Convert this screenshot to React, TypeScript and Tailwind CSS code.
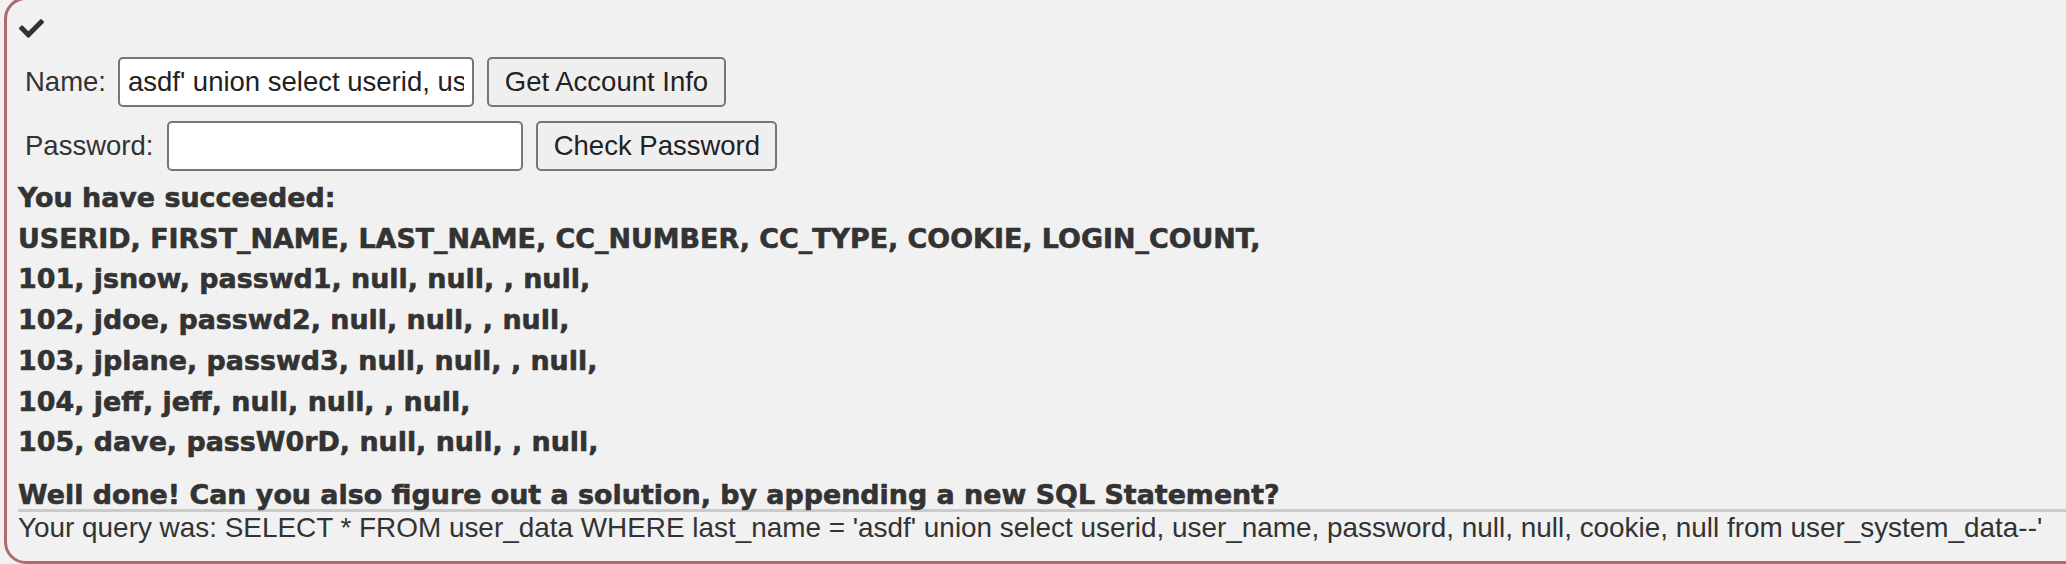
import { FaCheck } from 'react-icons/fa';

const rows = [
  'USERID, FIRST_NAME, LAST_NAME, CC_NUMBER, CC_TYPE, COOKIE, LOGIN_COUNT,',
  '101, jsnow, passwd1, null, null, , null,',
  '102, jdoe, passwd2, null, null, , null,',
  '103, jplane, passwd3, null, null, , null,',
  '104, jeff, jeff, null, null, , null,',
  '105, dave, passW0rD, null, null, , null,',
];

const query =
  "Your query was: SELECT * FROM user_data WHERE last_name = 'asdf' union select userid, user_name, password, null, null, cookie, null from user_system_data--'";

export default function App() {
  return (
    <div className="h-[564px] overflow-hidden bg-[#f1f1f1] text-[#333] font-['Liberation_Sans',Arial,sans-serif]">
      <div className="-mt-[3px] ml-[4px] w-[2200px] rounded-[22px] border-[3px] border-[#b26a6a] pl-[11px] pt-[16px] pb-[18px]">
        {/* status icon */}
        <FaCheck size={25} className="ml-[1px] text-[#333]" />

        {/* Name form */}
        <form className="mt-[16px] flex items-center pl-[7px] text-[27.5px]" onSubmit={(e) => e.preventDefault()}>
          <span>Name:</span>
          <input
            type="text"
            defaultValue="asdf' union select userid, user_name, password, null, null, cookie, null from user_system_data--"
            className="ml-[12px] h-[50px] w-[356px] rounded-[5px] border-2 border-[#767676] bg-white px-[8px] text-[#222] outline-none"
          />
          <button className="ml-[13px] h-[50px] w-[239px] rounded-[5px] border-2 border-[#767676] bg-[#efefef] text-[#222]">
            Get Account Info
          </button>
        </form>

        {/* Password form */}
        <form className="mt-[14px] flex items-center pl-[7px] text-[27.5px]" onSubmit={(e) => e.preventDefault()}>
          <span>Password:</span>
          <input
            type="text"
            className="ml-[14px] h-[50px] w-[356px] rounded-[5px] border-2 border-[#767676] bg-white px-[8px] outline-none"
          />
          <button className="ml-[13px] h-[50px] w-[241px] rounded-[5px] border-2 border-[#767676] bg-[#efefef] text-[#222]">
            Check Password
          </button>
        </form>

        {/* Output */}
        <div className="mt-[7px] font-['DejaVu_Sans',sans-serif] text-[26.9px] font-bold leading-[40.7px] whitespace-nowrap [-webkit-text-stroke:0.6px_#333]">
          <div>You have succeeded:</div>
          {rows.map((r, i) => (
            <div key={i}>{r}</div>
          ))}
        </div>

        <div className="mt-[18px] font-['DejaVu_Sans',sans-serif] text-[26.9px] font-bold leading-[28px] whitespace-nowrap [-webkit-text-stroke:0.6px_#333]">
          Well done! Can you also figure out a solution, by appending a new SQL Statement?
        </div>
        <div className="h-[3px] bg-[#cbcbcb]" />
        <div className="mt-[1.5px] text-[27.9px] leading-[30px] whitespace-nowrap">{query}</div>
      </div>
    </div>
  );
}
